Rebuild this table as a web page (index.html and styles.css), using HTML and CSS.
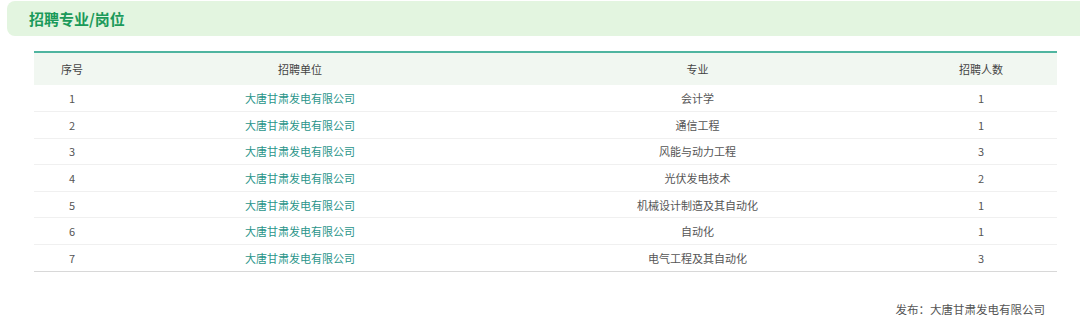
FILE: index.html
```html
<!DOCTYPE html>
<html lang="zh">
<head>
  <meta charset="UTF-8">
  <title>招聘专业/岗位</title>
  <link rel="stylesheet" href="styles.css">
</head>
<body>
  <div class="section">
    <!-- 标题栏 -->
    <div class="section-head">
      <h2>招聘专业/岗位</h2>
    </div>

    <!-- 岗位表格 -->
    <table class="job-table">
      <thead>
        <tr>
          <th class="col-no">序号</th>
          <th class="col-unit">招聘单位</th>
          <th class="col-major">专业</th>
          <th class="col-num">招聘人数</th>
        </tr>
      </thead>
      <tbody>
        <tr><td>1</td><td class="unit">大唐甘肃发电有限公司</td><td>会计学</td><td>1</td></tr>
        <tr><td>2</td><td class="unit">大唐甘肃发电有限公司</td><td>通信工程</td><td>1</td></tr>
        <tr><td>3</td><td class="unit">大唐甘肃发电有限公司</td><td>风能与动力工程</td><td>3</td></tr>
        <tr><td>4</td><td class="unit">大唐甘肃发电有限公司</td><td>光伏发电技术</td><td>2</td></tr>
        <tr><td>5</td><td class="unit">大唐甘肃发电有限公司</td><td>机械设计制造及其自动化</td><td>1</td></tr>
        <tr><td>6</td><td class="unit">大唐甘肃发电有限公司</td><td>自动化</td><td>1</td></tr>
        <tr><td>7</td><td class="unit">大唐甘肃发电有限公司</td><td>电气工程及其自动化</td><td>3</td></tr>
      </tbody>
    </table>

    <div class="publisher">发布：大唐甘肃发电有限公司</div>
  </div>
</body>
</html>
```

FILE: styles.css
```css
* {
  box-sizing: border-box;
}
body {
  margin: 0;
  padding: 0;
  background-color: #fff;
  color: #555;
  font-family: "Microsoft YaHei", "Noto Sans CJK SC", sans-serif;
}
.section {
  padding: 1px 0 0 7px;
}
/* --- 标题栏 --- */
.section-head {
  height: 35px;
  margin-right: -10px;
  padding-left: 22px;
  display: flex;
  align-items: center;
  background-color: #e3f5e0;
  border-radius: 8px;
}
.section-head h2 {
  margin: 0;
  font-size: 15px;
  font-weight: bold;
  color: #1b9a5a;
}
/* --- 表格 --- */
.job-table {
  width: 1023px;
  margin: 15px 0 0 27px;
  border-collapse: collapse;
  border-top: 2px solid #4fb5a0;
  font-size: 11px;
}
.job-table th {
  height: 33px;
  font-weight: normal;
  color: #444;
  background-color: #f1f7f1;
}
.job-table td {
  height: 26.6px;
  text-align: center;
  border-bottom: 1px solid #f0f0f0;
}
.job-table tbody tr:last-child td {
  border-bottom: 1px solid #d8d8d8;
}
.job-table td.unit {
  color: #2a958a;
}
.col-no { width: 76px; }
.col-unit { width: 380px; }
.col-major { width: 415px; }
.col-num { width: 152px; }
/* --- 发布单位 --- */
.publisher {
  margin-top: 29px;
  padding-right: 35px;
  text-align: right;
  font-size: 11.5px;
  color: #555;
}
```
